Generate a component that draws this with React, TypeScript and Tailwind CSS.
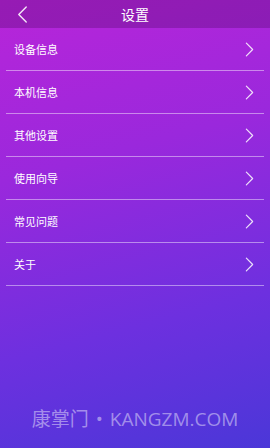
const items = ["设备信息", "本机信息", "其他设置", "使用向导", "常见问题", "关于"]

function Chevron({ left, className }: { left?: boolean; className?: string }) {
  return (
    <svg viewBox="0 0 10 16" className={className} fill="none" stroke="currentColor" strokeWidth={1.3} strokeLinecap="round" strokeLinejoin="round">
      {left ? <polyline points="8.5,1 1.5,8 8.5,15" /> : <polyline points="1.5,1 8.5,8 1.5,15" />}
    </svg>
  )
}

export default function App() {
  return (
    <div
      className="relative flex h-[448px] w-[270px] flex-col overflow-hidden bg-[linear-gradient(165deg,#b925d9_0%,#9a28dc_35%,#6d30df_70%,#4b37d8_100%)] text-white"
      style={{ fontFamily: '"Noto Sans CJK SC", "Noto Sans", sans-serif' }}
    >
      {/* header */}
      <div className="relative flex h-[28px] shrink-0 items-center justify-center bg-[#4a0860]/30">
        <Chevron left className="absolute left-[17px] top-[6px] h-[17px] w-[11px] text-white/90" />
        <span className="text-[14px] leading-none">设置</span>
      </div>

      <div className="flex flex-col">
        {items.map((label) => (
          <div key={label} className="mx-[6px] flex h-[43px] items-center justify-between border-b border-white/45 pl-[8px] pr-[10px]">
            <span className="text-[11px] leading-none">{label}</span>
            <Chevron className="h-[15px] w-[9px] text-white/85" />
          </div>
        ))}
      </div>

      <div
        className="mt-auto mb-[15px] flex items-center justify-center gap-[7px] text-[19px] text-white/45"
        style={{ fontFamily: '"Open Sans", "Noto Sans CJK SC", sans-serif' }}
      >
        <span>康掌门</span>
        <span>•</span>
        <span>KANGZM.COM</span>
      </div>
    </div>
  )
}
